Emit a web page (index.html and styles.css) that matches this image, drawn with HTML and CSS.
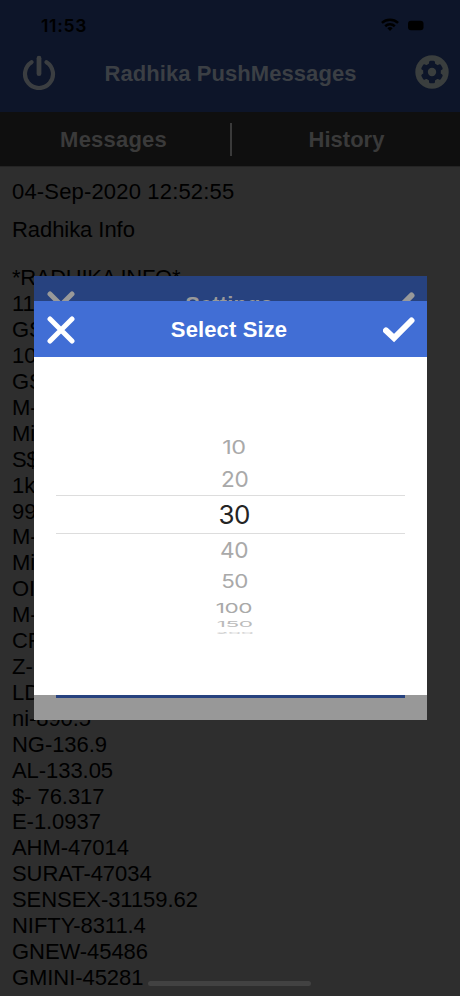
FILE: index.html
```html
<!DOCTYPE html>
<html lang="en">
<head>
<meta charset="utf-8">
<title>Radhika PushMessages</title>
<link rel="stylesheet" href="styles.css">
</head>
<body>
<div class="phone">
  <header class="top">
    <div class="status">
      <span class="clock">11:53</span>
      <svg class="signals" width="62" height="16" viewBox="0 0 62 16">
        <g fill="none" stroke="#000" stroke-width="2.5"><path d="M.9 5.8a12 12 0 0 1 16.2 0"/><path d="M4.2 9.2a7.2 7.2 0 0 1 9.6 0"/></g>
        <path d="M6.400 11.200a4 4 0 0 1 5.200 0L9 14z"/>
        <rect x="27" y="3.800" width="15.500" height="9.500" rx="3"/>
      </svg>
    </div>
    <div class="titlebar">
      <svg width="34" height="36" viewBox="0 0 34 36" fill="none" stroke="#3b3e41" stroke-linecap="round"><path stroke-width="4.2" d="M9.5 8.2a14 14 0 1 0 15 0"/><path stroke-width="4.8" d="M17 4.2v15.5"/></svg>
      <h1>Radhika PushMessages</h1>
      <svg width="34" height="34" viewBox="0 0 34 34"><circle cx="17" cy="17" r="16.7" fill="#3a3e3e"/><g fill="#0d1529"><circle cx="17" cy="17" r="8.9"/><rect x="14" y="5.8" width="6" height="22.4" rx="1.5"/><rect x="14" y="5.8" width="6" height="22.4" rx="1.5" transform="rotate(60 17 17)"/><rect x="14" y="5.8" width="6" height="22.4" rx="1.5" transform="rotate(120 17 17)"/></g><circle cx="17" cy="17" r="4.2" fill="#3a3e3e"/></svg>
    </div>
  </header>
  <nav class="tabs"><span>Messages</span><i></i><span>History</span></nav>
  <main class="feed">
    <p class="date">04-Sep-2020 12:52:55</p>
    <p class="subject">Radhika Info</p>
    <div class="lines">
      <p class="lead">*RADHIKA INFO*</p><p>11</p><p>GS</p><p>10</p><p>GS</p><p>M-</p><p>Mi</p><p>S$</p><p>1k</p><p>99</p><p>M-</p><p>Mi</p><p>OI</p><p>M-</p><p>CR</p><p>Z-</p><p>LD</p><p>ni-890.5</p><p>NG-136.9</p><p>AL-133.05</p><p>$- 76.317</p><p>E-1.0937</p><p>AHM-47014</p><p>SURAT-47034</p><p>SENSEX-31159.62</p><p>NIFTY-8311.4</p><p>GNEW-45486</p><p>GMINI-45281</p><p>SNEW-48716</p>
    </div>
  </main>
  <div class="home"></div>

  <section class="dialog settings">
    <div class="bar">
      <svg width="28" height="28" viewBox="0 0 28 28"><path d="M3 3l22 22M25 3L3 25"/></svg>
      <h2>Settings</h2>
      <svg width="32" height="28" viewBox="0 0 32 28"><path class="tick" d="M3 14.5l8 7.5L28.5 4.5"/></svg>
    </div>
    <div class="save"></div>
  </section>

  <section class="dialog size">
    <div class="bar">
      <svg width="28" height="28" viewBox="0 0 28 28"><path d="M3 3l22 22M25 3L3 25"/></svg>
      <h2>Select Size</h2>
      <svg width="32" height="28" viewBox="0 0 32 28"><path class="tick" d="M3 14.5l8 7.5L28.5 4.5"/></svg>
    </div>
    <div class="picker">
      <div class="row r10"><span>10</span></div>
      <div class="row r20"><span>20</span></div>
      <div class="row r30"><span>30</span></div>
      <div class="row r40"><span>40</span></div>
      <div class="row r50"><span>50</span></div>
      <div class="row r100"><span>100</span></div>
      <div class="row r150"><span>150</span></div>
      <div class="row r200"><span>200</span></div>
    </div>
  </section>
</div>
</body>
</html>
```
FILE: styles.css
```css
* { box-sizing: border-box; }
body, h1, h2, p { margin: 0; }
body { font-family: "Liberation Sans", Arial, sans-serif; }
.phone { position: relative; width: 460px; height: 996px; overflow: hidden; background: #2e2e2e; }

.top { height: 112px; background: #0d1529; }
.status { display: flex; justify-content: space-between; height: 50px; padding: 17px 17px 0 41px; }
.clock { font: 600 17.5px/18px Inter, sans-serif; letter-spacing: .7px; color: #000; }
.titlebar { display: flex; justify-content: space-between; align-items: center; height: 44px; padding: 0 11px 0 22px; }
.titlebar h1 { font-size: 22px; line-height: 26px; letter-spacing: .07px; color: #3b3f44; margin-left: 10px; margin-right: 20px; padding-top: 3px; }

.tabs { display: flex; align-items: center; height: 55px; background: #0f0f0f; border-bottom: 1px solid #242424; }
.tabs span { flex: 1; text-align: center; font-size: 22px; font-weight: 700; letter-spacing: .2px; color: #3a3a3a; padding: 2px 3px 0 0; }
.tabs span:last-child { letter-spacing: 0; padding: 2px 0 0 1px; }
.tabs i { width: 2px; height: 33px; background: #3a3a3a; }

.feed { padding: 12px 12px 0; font-size: 22px; line-height: 25.9px; color: #000; letter-spacing: -.06px; white-space: nowrap; }
.date { letter-spacing: .17px; }
.subject { margin-top: 12px; }
.lines { margin-top: 22.6px; }
.lead { letter-spacing: -.3px; }
.home { position: absolute; left: 148px; top: 981px; width: 163px; height: 5px; border-radius: 3px; background: #424242; }

.dialog { position: absolute; left: 34px; width: 392.5px; }
.bar { display: flex; align-items: center; justify-content: space-between; height: 56px; padding: 1px 11.5px 0 13px; background: #416ed5; color: #fff; }
.bar h2 { font-size: 22px; line-height: 26px; letter-spacing: .12px; padding-top: 1px; }
.bar svg { fill: none; stroke: #fff; stroke-width: 5; stroke-linecap: round; }
.bar .tick { stroke-width: 6; }
.settings { top: 276px; height: 444px; background: #989898; padding-bottom: 22px; display: flex; flex-direction: column; justify-content: space-between; }
.settings .bar { background: #27427f; color: #999; }
.settings .bar svg { stroke: #999; }
.save { height: 4px; margin: 0 22px; background: #27427f; }

.size { top: 301px; height: 393.5px; background: #fff; }
.picker { padding: 76px 22px 0; font-family: Inter, sans-serif; font-size: 26px; letter-spacing: -.5px; color: #a9a9a9; }
.row { display: flex; align-items: center; justify-content: center; padding-left: 8px; overflow: visible; line-height: 26px; }
.row span { display: block; height: 26px; flex: none; }
.r10 { height: 30px; } .r10 span { transform: scale(.9, .71); }
.r20 { height: 32px; } .r20 span { transform: scale(.87, .84); }
.r30 { height: 39px; border-top: 1px solid #ddd; border-bottom: 1px solid #ddd; color: #242424; }
.r40 { height: 32.5px; } .r40 span { transform: scale(.87, .84); }
.r50 { height: 31px; } .r50 span { transform: scale(.86, .72); }
.r100 { height: 20px; } .r100 span { transform: scale(.87, .53); }
.r150 { height: 13px; color: #bbb; } .r150 span { transform: scale(.87, .31); }
.r200 { height: 4px; color: #c8c8c8; } .r200 span { transform: scale(.8, .1); }
```
